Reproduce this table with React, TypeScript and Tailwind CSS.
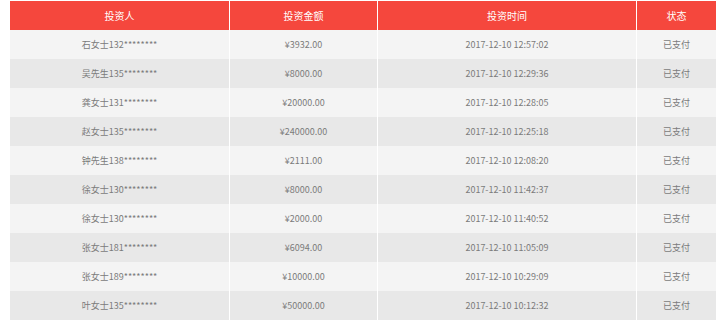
const rows = [
  ['石女士132********', '¥3932.00', '2017-12-10 12:57:02'],
  ['吴先生135********', '¥8000.00', '2017-12-10 12:29:36'],
  ['龚女士131********', '¥20000.00', '2017-12-10 12:28:05'],
  ['赵女士135********', '¥240000.00', '2017-12-10 12:25:18'],
  ['钟先生138********', '¥2111.00', '2017-12-10 12:08:20'],
  ['徐女士130********', '¥8000.00', '2017-12-10 11:42:37'],
  ['徐女士130********', '¥2000.00', '2017-12-10 11:40:52'],
  ['张女士181********', '¥6094.00', '2017-12-10 11:05:09'],
  ['张女士189********', '¥10000.00', '2017-12-10 10:29:09'],
  ['叶女士135********', '¥50000.00', '2017-12-10 10:12:32'],
];

export default function App() {
  return (
    <div
      className="w-[720px] h-[323px] bg-white pt-px pl-[9px] overflow-hidden"
      style={{ fontFamily: '"Microsoft YaHei", "Noto Sans CJK SC", "Noto Sans", sans-serif' }}
    >
      <table className="w-[707px] border-collapse table-fixed">
        <colgroup>
          <col className="w-[220px]" />
          <col className="w-[148px]" />
          <col className="w-[259px]" />
          <col className="w-[80px]" />
        </colgroup>
        <thead>
          <tr className="bg-[#f5473d] text-white text-[10px] h-[29px]">
            <th className="font-normal border-x border-white">投资人</th>
            <th className="font-normal border-x border-white">投资金额</th>
            <th className="font-normal border-x border-white">投资时间</th>
            <th className="font-normal border-x border-white">状态</th>
          </tr>
        </thead>
        <tbody>
          {rows.map((r, i) => (
            <tr
              key={i}
              className={`h-[29px] text-[9px] text-[#7b7b7b] ${i % 2 === 0 ? 'bg-[#f4f4f4]' : 'bg-[#e8e8e8]'}`}
            >
              <td className="text-center border-x border-white">{r[0]}</td>
              <td className="text-center border-x border-white">{r[1]}</td>
              <td className="text-center border-x border-white">{r[2]}</td>
              <td className="text-center border-x border-white">已支付</td>
            </tr>
          ))}
        </tbody>
      </table>
    </div>
  );
}
